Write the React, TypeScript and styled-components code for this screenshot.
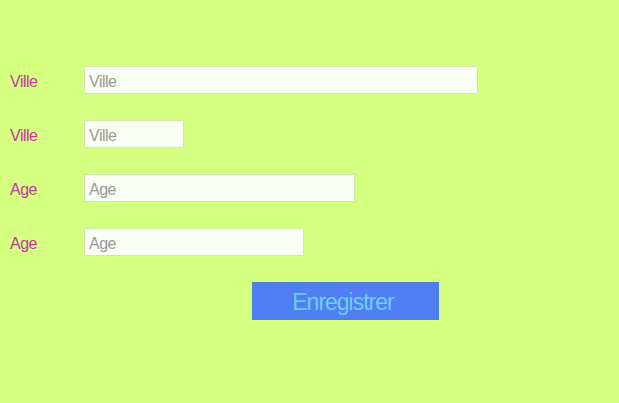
import { createGlobalStyle, styled } from 'styled-components';

const GlobalStyle = createGlobalStyle`
  html, body {
    margin: 0;
    padding: 0;
    background: #d4ff80;
    font-family: "Liberation Sans", Arial, sans-serif;
  }
`;

const Page = styled.main`
  width: 619px;
  height: 403px;
  padding-top: 66px;
  box-sizing: border-box;
`;

const Form = styled.form`
  display: flex;
  flex-direction: column;
  gap: 26px;
`;

const Row = styled.div`
  display: flex;
  align-items: center;
  height: 28px;
`;

const Label = styled.label`
  width: 74px;
  padding-left: 10px;
  padding-top: 3px;
  font-size: 16px;
  letter-spacing: -0.5px;
  color: #c23a9c;
`;

const Field = styled.input<{ $w: number }>`
  width: ${(p) => p.$w}px;
  height: 28px;
  box-sizing: border-box;
  margin: 0;
  padding: 3px 4px 0;
  border: 1px solid #cfe8a8;
  background: #fafff6;
  font-family: "Liberation Sans", Arial, sans-serif;
  font-size: 16px;
  letter-spacing: -0.5px;
  color: #555;
  outline: none;

  &::placeholder {
    color: #999;
  }
`;

const Submit = styled.button`
  margin-left: 252px;
  width: 187px;
  height: 38px;
  padding: 2px 5px 0 0;
  border: none;
  background: #507ff2;
  color: #6fcdf9;
  font-family: "Liberation Sans", Arial, sans-serif;
  font-size: 23px;
  letter-spacing: -1px;
  cursor: pointer;
`;

const fields = [
  { label: 'Ville', w: 394 },
  { label: 'Ville', w: 100 },
  { label: 'Age', w: 271 },
  { label: 'Age', w: 220 },
];

export default function App() {
  return (
    <Page>
      <GlobalStyle />
      <Form onSubmit={(e) => e.preventDefault()}>
        {fields.map((f, i) => (
          <Row key={i}>
            <Label>{f.label}</Label>
            <Field $w={f.w} placeholder={f.label} />
          </Row>
        ))}
        <Submit type="submit">Enregistrer</Submit>
      </Form>
    </Page>
  );
}
